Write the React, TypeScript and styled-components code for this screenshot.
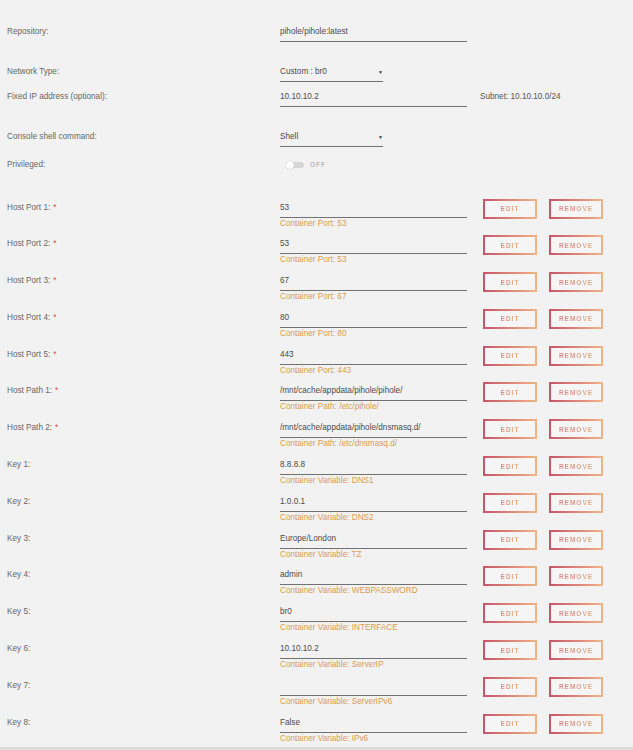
import React, { ReactElement } from "react";
import styled, { createGlobalStyle } from "styled-components";

const GlobalStyle = createGlobalStyle`
  html, body {
    margin: 0;
    padding: 0;
    background: #f2f2f2;
  }
  body {
    font-family: "Liberation Sans", Arial, sans-serif;
    font-size: 8.2px;
    color: #666;
  }
`;

const Page = styled.div`
  height: 750px;
  display: flex;
  flex-direction: column;
  overflow: hidden;
`;

const Form = styled.div`
  flex: 1;
  display: flex;
  flex-direction: column;
  overflow: hidden;
`;

const Footer = styled.div`
  height: 3px;
  background: #dcdcdc;
`;

const Row = styled.div<{ $top: number; $height?: number }>`
  display: grid;
  grid-template-columns: 273px 187px 16px 54px 12px 54px;
  align-items: start;
  padding-left: 7px;
  margin-top: ${(p) => p.$top}px;
  height: ${(p) => (p.$height ? `${p.$height}px` : "auto")};
  flex-shrink: 0;
`;

const Label = styled.div<{ $offset?: number }>`
  line-height: 12px;
  margin-top: ${(p) => p.$offset ?? 0}px;
  color: #676767;
  white-space: nowrap;
`;

const Required = styled.span`
  color: #e04848;
  margin-left: 3px;
`;

const Field = styled.div<{ $offset?: number; $width?: number }>`
  padding-top: ${(p) => p.$offset ?? 0}px;
  width: ${(p) => (p.$width ? `${p.$width}px` : "auto")};
`;

const Value = styled.div`
  position: relative;
  height: 12px;
  line-height: 12px;
  color: #4c4c4c;
  padding-bottom: 3px;
  border-bottom: 1.5px solid #727272;
  white-space: nowrap;
  overflow: hidden;
`;

const Arrow = styled.span`
  position: absolute;
  right: 0;
  top: 0;
  font-size: 5px;
  line-height: 12px;
  color: #333;
`;

const Hint = styled.div`
  line-height: 11px;
  color: #da9c50;
  white-space: nowrap;
`;

const Aside = styled.div`
  grid-column: 3 / -1;
  padding-left: 13px;
  line-height: 12px;
  color: #555;
  white-space: nowrap;
`;

const Toggle = styled.div`
  display: flex;
  align-items: center;
  gap: 6px;
  padding-left: 7px;
  height: 12px;
`;

const Track = styled.div`
  position: relative;
  width: 17px;
  height: 6px;
  border-radius: 3px;
  background: #d6d6d6;
`;

const Knob = styled.div`
  position: absolute;
  left: -1px;
  top: -1px;
  width: 8px;
  height: 8px;
  border-radius: 50%;
  background: #fff;
  box-shadow: 0 0 1px rgba(0, 0, 0, 0.4);
`;

const ToggleText = styled.span`
  font-size: 6.5px;
  letter-spacing: 1px;
  color: #999;
`;

const Button = styled.button<{ $col: number }>`
  grid-column: ${(p) => p.$col};
  box-sizing: border-box;
  width: 54px;
  height: 20px;
  padding: 0;
  background: #f5f5f5;
  border: 2px solid transparent;
  border-image: linear-gradient(90deg, #c8566a, #efb384) 1;
  font-family: "Liberation Sans", Arial, sans-serif;
  font-weight: bold;
  font-size: 6.5px;
  letter-spacing: 1px;
  cursor: pointer;

  span {
    background: linear-gradient(90deg, #d98a8a, #e6ab7e);
    -webkit-background-clip: text;
    background-clip: text;
    color: transparent;
  }
`;

type Mapping = {
  label: string;
  value: string;
  hint: string;
  required?: boolean;
};

const mappings: Mapping[] = [
  { label: "Host Port 1:", value: "53", hint: "Container Port: 53", required: true },
  { label: "Host Port 2:", value: "53", hint: "Container Port: 53", required: true },
  { label: "Host Port 3:", value: "67", hint: "Container Port: 67", required: true },
  { label: "Host Port 4:", value: "80", hint: "Container Port: 80", required: true },
  { label: "Host Port 5:", value: "443", hint: "Container Port: 443", required: true },
  { label: "Host Path 1:", value: "/mnt/cache/appdata/pihole/pihole/", hint: "Container Path: /etc/pihole/", required: true },
  { label: "Host Path 2:", value: "/mnt/cache/appdata/pihole/dnsmasq.d/", hint: "Container Path: /etc/dnsmasq.d/", required: true },
  { label: "Key 1:", value: "8.8.8.8", hint: "Container Variable: DNS1" },
  { label: "Key 2:", value: "1.0.0.1", hint: "Container Variable: DNS2" },
  { label: "Key 3:", value: "Europe/London", hint: "Container Variable: TZ" },
  { label: "Key 4:", value: "admin", hint: "Container Variable: WEBPASSWORD" },
  { label: "Key 5:", value: "br0", hint: "Container Variable: INTERFACE" },
  { label: "Key 6:", value: "10.10.10.2", hint: "Container Variable: ServerIP" },
  { label: "Key 7:", value: "", hint: "Container Variable: ServerIPv6" },
  { label: "Key 8:", value: "False", hint: "Container Variable: IPv6" },
];

const MappingRow = ({ label, value, hint, required, top }: Mapping & { top: number }): ReactElement => (
  <Row $top={top} $height={36.8}>
    <Label $offset={3}>
      {label}
      {required ? <Required>*</Required> : null}
    </Label>
    <Field $offset={3}>
      <Value>{value}</Value>
      <Hint>{hint}</Hint>
    </Field>
    <Button $col={4}><span>EDIT</span></Button>
    <Button $col={6}><span>REMOVE</span></Button>
  </Row>
);

export default function App(): ReactElement {
  return (
    <Page>
      <GlobalStyle />
      <Form>
        <Row $top={26}>
          <Label>Repository:</Label>
          <Field>
            <Value>pihole/pihole:latest</Value>
          </Field>
        </Row>

        <Row $top={24}>
          <Label>Network Type:</Label>
          <Field $width={103}>
            <Value>
              Custom : br0
              <Arrow>▼</Arrow>
            </Value>
          </Field>
        </Row>

        <Row $top={9}>
          <Label>Fixed IP address (optional):</Label>
          <Field>
            <Value>10.10.10.2</Value>
          </Field>
          <Aside>Subnet: 10.10.10.0/24</Aside>
        </Row>

        <Row $top={24}>
          <Label>Console shell command:</Label>
          <Field $width={103}>
            <Value>
              Shell
              <Arrow>▼</Arrow>
            </Value>
          </Field>
        </Row>

        <Row $top={11.5}>
          <Label>Privileged:</Label>
          <Toggle>
            <Track>
              <Knob />
            </Track>
            <ToggleText>OFF</ToggleText>
          </Toggle>
        </Row>

        {mappings.map((m, i) => (
          <MappingRow key={m.label} {...m} top={i === 0 ? 28 : 0} />
        ))}
      </Form>
      <Footer />
    </Page>
  );
}
